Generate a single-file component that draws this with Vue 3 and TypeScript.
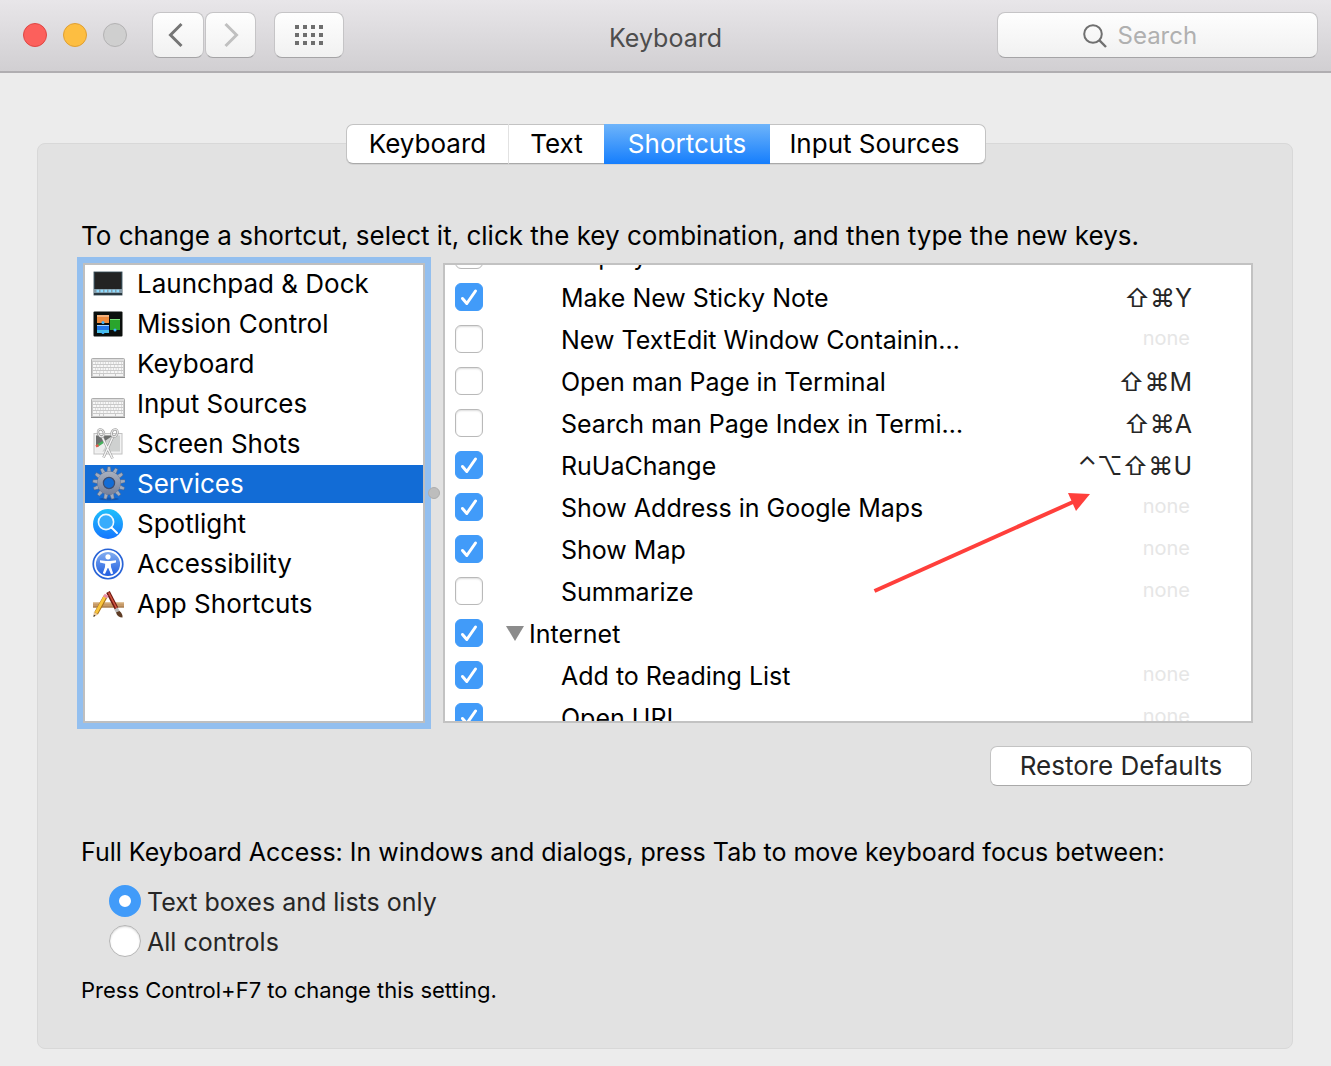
<script setup lang="ts">
import { ref } from 'vue'

interface Category {
  id: string
  label: string
}

interface Service {
  label: string
  enabled: boolean
  keys?: string
  group?: boolean
}

const tabs = ['Keyboard', 'Text', 'Shortcuts', 'Input Sources']
const activeTab = ref('Shortcuts')

const categories: Category[] = [
  { id: 'launchpad', label: 'Launchpad & Dock' },
  { id: 'mission', label: 'Mission Control' },
  { id: 'keyboard', label: 'Keyboard' },
  { id: 'input', label: 'Input Sources' },
  { id: 'screenshots', label: 'Screen Shots' },
  { id: 'services', label: 'Services' },
  { id: 'spotlight', label: 'Spotlight' },
  { id: 'accessibility', label: 'Accessibility' },
  { id: 'apps', label: 'App Shortcuts' },
]
const activeCategory = ref('services')

const services = ref<Service[]>([
  { label: 'Display Font Collection', enabled: false },
  { label: 'Make New Sticky Note', enabled: true, keys: '⇧⌘Y' },
  { label: 'New TextEdit Window Containin…', enabled: false, keys: 'none' },
  { label: 'Open man Page in Terminal', enabled: false, keys: '⇧⌘M' },
  { label: 'Search man Page Index in Termi…', enabled: false, keys: '⇧⌘A' },
  { label: 'RuUaChange', enabled: true, keys: '⌃⌥⇧⌘U' },
  { label: 'Show Address in Google Maps', enabled: true, keys: 'none' },
  { label: 'Show Map', enabled: true, keys: 'none' },
  { label: 'Summarize', enabled: false, keys: 'none' },
  { label: 'Internet', enabled: true, group: true },
  { label: 'Add to Reading List', enabled: true, keys: 'none' },
  { label: 'Open URL', enabled: true, keys: 'none' },
])

const access = ref('lists')
const teeth = Array.from({ length: 13 }, (_, i) => (i * 360) / 13)
const keyRows = [18, 21, 24, 27]
</script>

<template>
  <div class="window">
    <header class="toolbar">
      <div class="tools">
        <div class="lights">
          <button class="light close" aria-label="Close"></button>
          <button class="light minimize" aria-label="Minimize"></button>
          <button class="light zoom" aria-label="Zoom" disabled></button>
        </div>
        <div class="nav">
          <button class="tool back" aria-label="Back">
            <svg width="16" height="26" viewBox="0 0 16 26"><path d="M13.500 2 2.500 13l11 11" fill="none" stroke="#757575" stroke-width="3" /></svg>
          </button>
          <button class="tool forward" aria-label="Forward">
            <svg width="16" height="26" viewBox="0 0 16 26"><path d="M2.500 2l11 11-11 11" fill="none" stroke="#c0c0c0" stroke-width="3" /></svg>
          </button>
        </div>
        <button class="tool all" aria-label="Show All">
          <svg width="28" height="20" viewBox="0 0 28 20" fill="#6e6e6e">
            <template v-for="y in 3" :key="y">
              <rect v-for="x in 4" :key="x" :x="(x - 1) * 8" :y="(y - 1) * 8" width="4" height="4" />
            </template>
          </svg>
        </button>
      </div>
      <h1>Keyboard</h1>
      <label class="search">
        <svg width="24" height="24" viewBox="0 0 24 24" fill="none" stroke="#707070" stroke-width="2"><circle cx="10" cy="10" r="8.800" /><path d="M16.200 16.200 23 23" stroke-width="2.400" /></svg>
        <input type="text" placeholder="Search" aria-label="Search" />
      </label>
    </header>

    <main>
      <div class="tabs" role="tablist">
        <button
          v-for="tab in tabs"
          :key="tab"
          role="tab"
          :aria-selected="tab === activeTab"
          :class="{ active: tab === activeTab }"
          @click="activeTab = tab"
        >{{ tab }}</button>
      </div>

      <section class="panel">
        <p class="intro">To change a shortcut, select it, click the key combination, and then type the new keys.</p>

        <div class="lists">
          <ul class="categories">
            <li v-for="c in categories" :key="c.id">
              <button :class="{ active: c.id === activeCategory }" @click="activeCategory = c.id">
                <svg width="34" height="38" viewBox="0 0 34 38">
                  <template v-if="c.id === 'launchpad'">
                    <rect x="2.500" y="6.500" width="29" height="24" rx="1" fill="#31424b" stroke="#a9b3b8" />
                    <rect x="4" y="7.500" width="26" height="17" fill="#232323" />
                    <path d="M3 24h28v4H3z" fill="#8299a6" />
                    <path d="M3 28h28v2H3z" fill="#2b3940" />
                    <path d="M5.500 26h23" stroke="#8fdcff" stroke-width="2.400" stroke-dasharray="2.600 1.400" />
                  </template>
                  <template v-else-if="c.id === 'mission'">
                    <rect x="2.500" y="6.500" width="29" height="25" rx="1" fill="#0b0f0d" />
                    <rect x="6" y="10" width="12" height="8" fill="#ee8b3d" />
                    <path d="M6 10h12v2H6z" fill="#f5b27c" />
                    <rect x="6" y="20" width="12" height="8" fill="#2377e8" />
                    <path d="M6 20h12v1H6z" fill="#a8d4ff" />
                    <path d="M6 25h12v3H6z" fill="#4cc0e8" />
                    <rect x="19" y="14" width="10" height="11" fill="#2aa52c" />
                    <path d="M19 14h10v1H19z" fill="#7be07a" />
                    <circle cx="12" cy="17.500" r="1.500" fill="#41b6ff" /><circle cx="12" cy="27.500" r="1.500" fill="#41b6ff" /><circle cx="24" cy="25" r="1.500" fill="#41b6ff" />
                  </template>
                  <template v-else-if="c.id === 'keyboard' || c.id === 'input'">
                    <rect x=".5" y="13.500" width="33" height="19" rx="1" fill="#c9c9c9" stroke="#adadad" />
                    <path d="M1 14h32v2H1z" fill="#dedede" />
                    <path v-for="(y, i) in keyRows" :key="y" :d="`M2 ${y}h30`" stroke="#f7f7f7" stroke-width="2" :stroke-dasharray="i % 2 ? '3 .6' : '2 .6'" />
                    <path d="M2 30h6M9 30h3M13 30h11M25 30h7" stroke="#f4f4f4" stroke-width="2" />
                    <path d="M0 32.500h34" stroke="#8b8b8b" />
                  </template>
                  <template v-else-if="c.id === 'screenshots'">
                    <rect x="3" y="8.500" width="28" height="20.500" fill="#f2f2f2" stroke="#c2c2c2" />
                    <path d="M5 10.500h24v16H5z" fill="#cfd1d0" />
                    <path d="M5 10.500h17L5 22z" fill="#6c6e6d" />
                    <path d="M5 22l9-5 3 1-6 9H5z" fill="#eeeeee" />
                    <path d="M6 21l6-4" stroke="#46b25d" stroke-width="2.500" /><path d="M5 21.500l2.500-1.500" stroke="#e2584c" stroke-width="2.500" />
                    <path d="M11 11.500l10.500 22M22 11.500l-9.500 21" stroke="#9b9b9b" stroke-width="2.600" />
                    <path d="M11 11.500l10.500 22M22 11.500l-9.500 21" stroke="#f4f4f4" stroke-width="1.500" />
                    <g fill="none" stroke="#9b9b9b" stroke-width="2.400"><ellipse cx="10" cy="8" rx="2.800" ry="3.800" transform="rotate(-25 10 8)" /><ellipse cx="23.500" cy="8" rx="2.800" ry="3.800" transform="rotate(25 23.500 8)" /></g>
                    <g fill="none" stroke="#ececec" stroke-width="1"><ellipse cx="10" cy="8" rx="2.800" ry="3.800" transform="rotate(-25 10 8)" /><ellipse cx="23.500" cy="8" rx="2.800" ry="3.800" transform="rotate(25 23.500 8)" /></g>
                  </template>
                  <template v-else-if="c.id === 'services'">
                    <defs><linearGradient id="gear" gradientUnits="userSpaceOnUse" x1="0" y1="6" x2="0" y2="30"><stop offset="0" stop-color="#aab1bf" /><stop offset="1" stop-color="#75809a" /></linearGradient></defs>
                    <ellipse cx="18" cy="34" rx="10" ry="1.500" fill="#0b4a9d" opacity=".6" />
                    <g v-for="a in teeth" :key="a" :transform="`rotate(${a} 18 18)`"><path d="M15.800 8.500l.8-6.800h2.800l.8 6.800z" fill="#a3acbc" stroke="#4d6288" stroke-width=".5" /></g>
                    <circle cx="18" cy="18" r="8.500" fill="none" stroke="#4d6288" stroke-width="6.600" />
                    <circle cx="18" cy="18" r="8.600" fill="none" stroke="url(#gear)" stroke-width="6" />
                    <circle cx="18" cy="18" r="5.600" fill="#126cd6" stroke="#3d4d70" stroke-width="1.200" />
                  </template>
                  <template v-else-if="c.id === 'spotlight'">
                    <defs><linearGradient id="spot" x1="0" y1="0" x2="0" y2="1"><stop offset="0" stop-color="#1fc0fb" /><stop offset="1" stop-color="#1576ff" /></linearGradient></defs>
                    <circle cx="17" cy="19" r="15" fill="url(#spot)" />
                    <circle cx="15" cy="17" r="7.600" fill="#37acfc" stroke="#eef8ff" stroke-width="1.600" />
                    <path d="M20.500 22.500l5.500 5.500" stroke="#fff" stroke-width="2" stroke-linecap="round" />
                  </template>
                  <template v-else-if="c.id === 'accessibility'">
                    <defs><linearGradient id="acc" x1="0" y1="0" x2="0" y2="1"><stop offset="0" stop-color="#86b0f1" /><stop offset="1" stop-color="#1b5ae0" /></linearGradient></defs>
                    <circle cx="17" cy="19" r="15.600" fill="#2863d6" />
                    <circle cx="17" cy="19" r="13" fill="url(#acc)" stroke="#fff" stroke-width="1.800" />
                    <circle cx="17" cy="11.800" r="2.600" fill="#fff" />
                    <path d="M9 15.300l6 .7h4l6-.7v2.200l-5.200 1.200.2 3.300 2.200 6.500-2.200.8L17.300 23h-.6L14 29l-2.200-.8L14 22l.2-3.300L9 17.500z" fill="#fff" />
                  </template>
                  <template v-else>
                    <path d="M2 17.500h31v5H2z" fill="#c69a69" /><path d="M2 17.500h31v1H2z" fill="#dbb687" /><path d="M2 21.500h31v1H2z" fill="#9c7045" />
                    <path d="M17 7L25.500 23.500" stroke="#6e1a12" stroke-width="4" /><path d="M17.500 7.500L25.500 23" stroke="#d45540" stroke-width="1.600" />
                    <path d="M25 23.500l2.200 4" stroke="#b8b8b8" stroke-width="4" /><path d="M25 27.500l3.500-1.500q3.500 3 3 6.500-5 0-6.500-5z" fill="#5e3c25" />
                    <path d="M14.500 11.500L5 28.500" stroke="#a9731a" stroke-width="4.400" /><path d="M14 11.500L5 28" stroke="#fbc63c" stroke-width="2.800" />
                    <path d="M15.600 9.800l-1.500 2.700" stroke="#e98ca3" stroke-width="4.400" /><path d="M2.800 27l4.400 2.400L2.500 32z" fill="#e9c79a" /><path d="M2.500 32l.3-2.300 1.700 1z" fill="#222" />
                  </template>
                </svg>
                <span>{{ c.label }}</span>
              </button>
            </li>
          </ul>

          <div class="splitter"><i></i></div>

          <div class="services">
            <ul>
              <li v-for="s in services" :key="s.label">
                <label>
                  <span class="check">
                    <input v-model="s.enabled" type="checkbox" />
                    <svg width="28" height="28" viewBox="0 0 28 28" fill="none" stroke="#fff" stroke-width="3" stroke-linecap="round" stroke-linejoin="round"><path d="M7.500 15.500l4.300 5L20.500 8" /></svg>
                  </span>
                  <svg v-if="s.group" class="disclosure" width="18" height="16" viewBox="0 0 18 16"><path d="M0 0h18L9 15z" fill="#8c8c8c" /></svg>
                  <span :class="s.group ? 'group' : 'name'">{{ s.label }}</span>
                </label>
                <span v-if="s.keys" :class="s.keys === 'none' ? 'none' : 'keys'">{{ s.keys }}</span>
              </li>
            </ul>
            <svg class="arrow" width="220" height="105" viewBox="0 0 220 105">
              <path d="M4.500 101L203 12" stroke="#ff3f3b" stroke-width="4" />
              <path d="M198 3l22 1-14 17z" fill="#ff3f3b" />
            </svg>
          </div>
        </div>

        <div class="actions"><button class="restore">Restore Defaults</button></div>

        <fieldset>
          <legend>Full Keyboard Access: In windows and dialogs, press Tab to move keyboard focus between:</legend>
          <label><input v-model="access" type="radio" name="access" value="lists" /><span>Text boxes and lists only</span></label>
          <label><input v-model="access" type="radio" name="access" value="all" /><span>All controls</span></label>
        </fieldset>
        <p class="hint">Press Control+F7 to change this setting.</p>
      </section>
    </main>
  </div>
</template>

<style>
body {
  margin: 0;
  background: #ececec;
}
</style>

<style scoped>
* {
  box-sizing: border-box;
}
.window {
  min-height: 100vh;
  background: #ececec;
  font-family: Inter, "Liberation Sans", sans-serif;
  font-size: 25px;
  line-height: 32px;
  color: #000;
}
button,
input {
  font: inherit;
  color: inherit;
  margin: 0;
  padding: 0;
}
button {
  border: 0;
}
ul {
  list-style: none;
  margin: 0;
  padding: 0;
}
.toolbar {
  display: grid;
  grid-template-columns: 1fr auto 1fr;
  align-items: start;
  height: 73px;
  padding: 12px 13px 0;
  background: linear-gradient(#e8e6e9, #d1cfd2);
  border-bottom: 2px solid #b0aeb1;
}
.tools,
.lights,
.nav {
  display: flex;
  align-items: center;
}
.lights {
  gap: 16px;
  margin-left: 10px;
}
.light {
  width: 24px;
  height: 24px;
  border-radius: 50%;
  border: 1px solid;
}
.close {
  background: #fc605c;
  border-color: #de4744;
}
.minimize {
  background: #fdbe41;
  border-color: #df9f34;
}
.zoom {
  background: #cfcfcf;
  border-color: #b3b2b3;
}
.nav {
  margin-left: 25px;
  gap: 1px;
}
.tool,
.search {
  height: 46px;
  border: 1px solid #c5c4c6;
  border-bottom-color: #a5a4a6;
  border-radius: 8px;
  background: linear-gradient(#fefefe, #f1f1f1);
}
.tool {
  display: grid;
  place-items: center;
}
.back {
  width: 52px;
  padding-right: 4px;
}
.forward {
  width: 51px;
}
.all {
  width: 70px;
  margin-left: 18px;
}
h1 {
  margin: 0;
  padding-top: 10px;
  font-size: 25px;
  font-weight: 400;
  line-height: 32px;
  color: #4d4d4d;
}
.search {
  justify-self: end;
  display: flex;
  align-items: center;
  justify-content: center;
  gap: 11px;
  width: 321px;
  padding-top: 2px;
}
.search input {
  width: 115px;
  border: 0;
  outline: 0;
  background: none;
  font-size: 24px;
}
.search input::placeholder {
  color: #b0b0b0;
  opacity: 1;
}
main {
  padding: 51px 38px 18px 37px;
}
.tabs {
  position: relative;
  display: grid;
  grid-template-columns: 163px 95px 166px 216px;
  width: max-content;
  height: 40px;
  margin: 0 auto;
  padding-left: 2px;
  font-size: 26px;
}
.tabs button {
  background: #fff;
  border: solid #c3c3c3;
  border-width: 1px 0;
  border-bottom-color: #a9a9a9;
  box-shadow: 0 1px 0 #d3d3d3;
}
.tabs button:first-child {
  border-width: 1px;
  border-right-color: #e2e2e2;
  border-radius: 7px 0 0 7px;
}
.tabs button:last-child {
  border-right-width: 1px;
  border-radius: 0 7px 7px 0;
  padding-right: 6px;
}
.tabs .active {
  background: linear-gradient(#6eb4fa, #157efd);
  border: 0;
  color: #fff;
}
.panel {
  margin-top: -21px;
  padding: 76px 39px 42px 43px;
  background: #e2e2e2;
  border: 1px solid #d8d8d8;
  border-radius: 8px;
}
p {
  margin: 0;
}
.intro {
  font-size: 26px;
}
.lists {
  display: flex;
  height: 460px;
  margin: 11px 0 0 2px;
}
.categories {
  width: 342px;
  border: 2px solid #bfbfbf;
  background: #fff;
  box-shadow: 0 0 0 6px #93bfef;
  font-size: 26px;
}
.categories li {
  padding-bottom: 2px;
}
.categories button {
  display: flex;
  align-items: center;
  gap: 12px;
  width: 100%;
  height: 38px;
  padding-left: 6px;
  background: none;
  text-align: left;
}
.categories .active {
  background: #126cd6;
  color: #fff;
}
.splitter {
  display: grid;
  place-items: center;
  width: 18px;
}
.splitter i {
  width: 12px;
  height: 12px;
  border-radius: 50%;
  background: #bdbdbd;
  border: 1px solid #adadad;
  z-index: 1;
}
.services {
  position: relative;
  flex: 1;
  overflow: hidden;
  background: #fff;
  border: 2px solid #c2c2c2;
}
.services ul {
  margin-top: -30px;
}
.services li {
  display: flex;
  align-items: center;
  justify-content: space-between;
  height: 42px;
  padding: 0 59px 0 10px;
}
.services label {
  display: flex;
  align-items: center;
}
.check {
  display: grid;
  padding-bottom: 2px;
}
.check > * {
  grid-area: 1 / 1;
}
.check input {
  appearance: none;
  width: 28px;
  height: 28px;
  border: 1px solid #b9b9b9;
  border-radius: 6px;
  background: #fff;
  box-shadow: inset 0 1px 2px #dcdcdc;
}
.check input:checked {
  background: #419bf9;
  border-color: #419bf9;
  box-shadow: none;
}
.check svg {
  visibility: hidden;
  pointer-events: none;
}
.check input:checked + svg {
  visibility: visible;
}
.name {
  margin-left: 78px;
}
.disclosure {
  margin-left: 23px;
}
.group {
  margin-left: 5px;
}
.keys {
  color: #262626;
}
.none {
  padding: 0 2px 4px 0;
  font-size: 20px;
  color: #e6e6e6;
}
.arrow {
  position: absolute;
  top: 225px;
  right: 161px;
}
.actions {
  display: flex;
  justify-content: flex-end;
  margin-top: 23px;
}
.restore {
  width: 262px;
  height: 40px;
  margin-right: 1px;
  background: #fff;
  border: 1px solid #c3c3c3;
  border-bottom-color: #a9a9a9;
  border-radius: 7px;
  font-size: 26px;
  color: #262626;
}
fieldset {
  margin: 50px 0 0;
  padding: 0;
  border: 0;
}
legend {
  padding: 0;
  margin-bottom: 13px;
}
fieldset label {
  display: flex;
  align-items: center;
  gap: 6px;
  height: 40px;
  margin-left: 28px;
  color: #262626;
}
fieldset label span {
  padding-top: 2px;
}
fieldset input {
  appearance: none;
  width: 32px;
  height: 32px;
  border: 1px solid #b5b5b5;
  border-radius: 50%;
  background: #fff;
  box-shadow: inset 0 1px 2px #d5d5d5;
}
fieldset input:checked {
  border: 10px solid #419bf9;
  box-shadow: none;
}
.hint {
  margin-top: 13px;
  font-size: 22px;
}
</style>
